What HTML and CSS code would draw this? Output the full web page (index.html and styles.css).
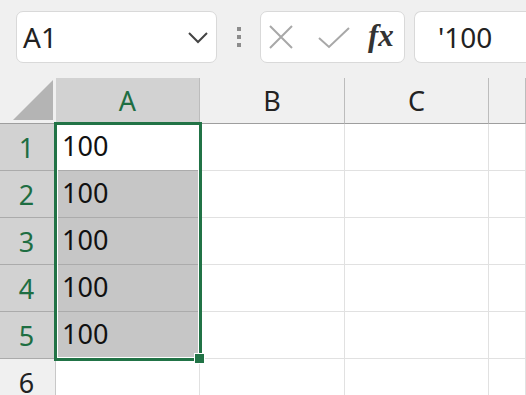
FILE: index.html
```html
<!DOCTYPE html>
<html>
<head>
    <title>Sheet</title>
    <link rel="stylesheet" href="styles.css">
</head>
<body>
    <div class="toolbar">
        <div class="namebox">
            <span class="name">A1</span>
            <svg class="chevron" width="20" height="12" viewBox="0 0 20 12"><polyline points="1,1 10,10 19,1" fill="none" stroke="#444" stroke-width="2"/></svg>
        </div>
        <div class="grip"><i></i><i></i><i></i></div>
        <div class="buttons">
            <svg class="btn-x" width="24" height="24" viewBox="0 0 24 24"><path d="M1 1 L23 23 M23 1 L1 23" stroke="#a8a8a8" stroke-width="2" fill="none"/></svg>
            <svg class="btn-ok" width="32" height="22" viewBox="0 0 32 22"><polyline points="1,11 11,20 31,1" fill="none" stroke="#a8a8a8" stroke-width="2"/></svg>
            <span class="fx">fx</span>
        </div>
        <div class="formula">'100</div>
    </div>

    <div class="sheet">
        <div class="corner"><svg width="40" height="40" viewBox="0 0 40 40"><polygon points="0,40 40,0 40,40" fill="#b4b4b4"/></svg></div>
        <div class="col-head active">A</div>
        <div class="col-head">B</div>
        <div class="col-head">C</div>
        <div class="col-head"></div>

        <div class="row-head active">1</div>
        <div class="cell sel first">100</div>
        <div class="cell"></div><div class="cell"></div><div class="cell"></div>

        <div class="row-head active">2</div>
        <div class="cell sel">100</div>
        <div class="cell"></div><div class="cell"></div><div class="cell"></div>

        <div class="row-head active">3</div>
        <div class="cell sel">100</div>
        <div class="cell"></div><div class="cell"></div><div class="cell"></div>

        <div class="row-head active">4</div>
        <div class="cell sel">100</div>
        <div class="cell"></div><div class="cell"></div><div class="cell"></div>

        <div class="row-head active">5</div>
        <div class="cell sel">100</div>
        <div class="cell"></div><div class="cell"></div><div class="cell"></div>

        <div class="row-head">6</div>
        <div class="cell"></div>
        <div class="cell"></div><div class="cell"></div><div class="cell"></div>

        <div class="selection"></div>
        <div class="handle"></div>
    </div>
</body>
</html>
```

FILE: styles.css
```css
body { margin: 0; background: #f0f0f0; font-family: "Noto Sans", sans-serif; overflow: hidden; width: 526px; height: 395px; }

.toolbar { display: flex; align-items: center; height: 78px; padding-left: 16px; box-sizing: border-box; padding-bottom: 4px; }
.namebox { box-sizing: border-box; width: 201px; height: 52px; background: #fff; border: 1px solid #d9d9d9; border-radius: 7px; display: flex; align-items: center; justify-content: space-between; padding: 0 8px 0 6px; }
.name { font-size: 28px; color: #222; }
.chevron { margin-top: 2px; }
.grip { display: flex; flex-direction: column; gap: 4px; margin: 0 19px 0 20px; }
.grip i { display: block; width: 4px; height: 4px; background: #8c8c8c; }
.buttons { box-sizing: border-box; width: 145px; height: 52px; background: #fff; border: 1px solid #d9d9d9; border-radius: 7px; display: flex; align-items: center; padding-left: 8px; }
.btn-x { margin-right: 25px; }
.btn-ok { margin-right: 18px; margin-top: 1px; }
.fx { font-family: "Liberation Serif", serif; font-style: italic; font-weight: bold; font-size: 31px; color: #333; margin-top: -2px; }
.formula { box-sizing: border-box; margin-left: 9px; flex: 1; height: 52px; background: #fff; border: 1px solid #d9d9d9; border-right: none; border-radius: 7px 0 0 7px; padding-left: 23px; font-size: 28px; color: #222; display: flex; align-items: center; }

.sheet { position: relative; display: grid; grid-template-columns: 56px 144px 145px 144px 1fr; grid-template-rows: 46px repeat(6, 47px); }
.corner { display: flex; align-items: flex-end; justify-content: flex-end; padding: 0 3px 3px 0; border-bottom: 1px solid #9e9e9e; }
.corner svg { display: block; }
.col-head { display: flex; align-items: center; justify-content: center; font-size: 27px; color: #222; border-right: 1px solid #bcbcbc; border-bottom: 1px solid #9e9e9e; }
.col-head.active { background: #d2d2d2; color: #1e6e42; }
.row-head { display: flex; align-items: center; justify-content: center; font-size: 27px; color: #222; background: #f0f0f0; border-right: 1px solid #c8c8c8; border-bottom: 1px solid #c8c8c8; padding-right: 2px; }
.row-head.active { background: #d2d2d2; color: #1e6e42; border-bottom-color: #ababab; border-right-color: #ababab; }
.cell { box-sizing: border-box; background: #fff; border-right: 1px solid #e1e1e1; border-bottom: 1px solid #e1e1e1; font-size: 27px; color: #111; display: flex; align-items: center; padding-left: 6px; padding-bottom: 3px; }
.cell.sel { background: #c6c6c6; border-bottom-color: #ababab; }
.cell.first { background: #fff; }

.selection { position: absolute; left: 54px; top: 44px; width: 148px; height: 239px; box-sizing: border-box; border: 3px solid #217346; box-shadow: inset 0 0 0 1px #fff; pointer-events: none; }
.handle { position: absolute; left: 194px; top: 275px; width: 9px; height: 9px; background: #217346; border: 1px solid #fff; }
```
